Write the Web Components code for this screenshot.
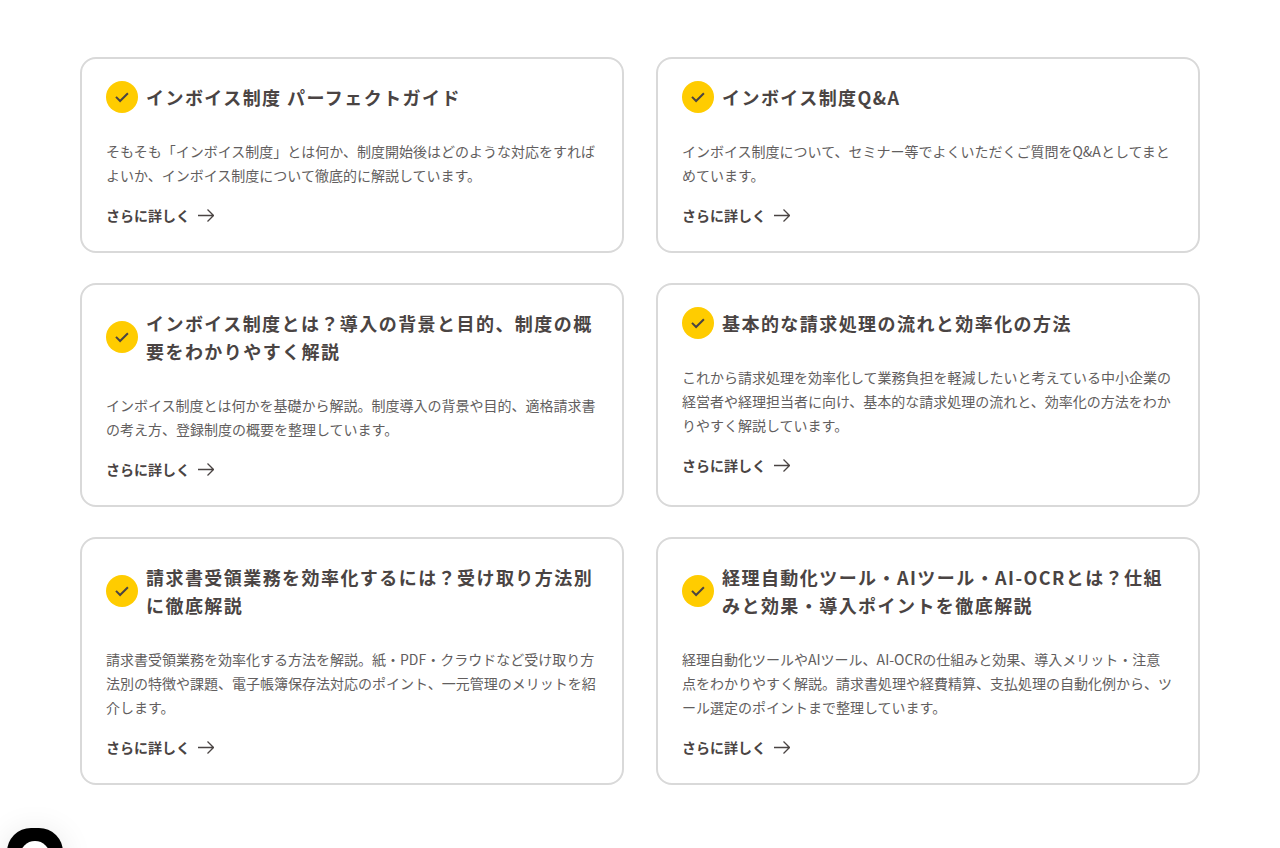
<!DOCTYPE html>
<html lang="ja">
<head>
<meta charset="utf-8">
<meta name="viewport" content="width=device-width, initial-scale=1">
<title>インボイス制度</title>
<style>
  body {
    margin: 0;
    background: #fff;
    color: #4a4443;
    font-family: "Noto Sans CJK JP", sans-serif;
  }
</style>
</head>
<body>
<article-grid>
  <article-card href="#guide">
    <span slot="title">インボイス制度 パーフェクトガイド</span>
    そもそも「インボイス制度」とは何か、制度開始後はどのような対応をすればよいか、インボイス制度について徹底的に解説しています。
  </article-card>
  <article-card href="#qa">
    <span slot="title">インボイス制度Q&amp;A</span>
    インボイス制度について、セミナー等でよくいただくご質問をQ&amp;Aとしてまとめています。
  </article-card>
  <article-card href="#background">
    <span slot="title">インボイス制度とは？導入の背景と目的、制度の概要をわかりやすく解説</span>
    インボイス制度とは何かを基礎から解説。制度導入の背景や目的、適格請求書の考え方、登録制度の概要を整理しています。
  </article-card>
  <article-card href="#billing">
    <span slot="title">基本的な請求処理の流れと効率化の方法</span>
    これから請求処理を効率化して業務負担を軽減したいと考えている中小企業の経営者や経理担当者に向け、基本的な請求処理の流れと、効率化の方法をわかりやすく解説しています。
  </article-card>
  <article-card href="#receiving">
    <span slot="title">請求書受領業務を効率化するには？受け取り方法別に徹底解説</span>
    請求書受領業務を効率化する方法を解説。紙・PDF・クラウドなど受け取り方法別の特徴や課題、電子帳簿保存法対応のポイント、一元管理のメリットを紹介します。
  </article-card>
  <article-card href="#automation">
    <span slot="title">経理自動化ツール・AIツール・AI-OCRとは？仕組みと効果・導入ポイントを徹底解説</span>
    経理自動化ツールやAIツール、AI-OCRの仕組みと効果、導入メリット・注意点をわかりやすく解説。請求書処理や経費精算、支払処理の自動化例から、ツール選定のポイントまで整理しています。
  </article-card>
</article-grid>
<chat-launcher></chat-launcher>

<script>
class ArticleGrid extends HTMLElement {
  constructor() {
    super();
    this.attachShadow({ mode: "open" }).innerHTML = `
      <style>
        :host { display: block; padding: 57px 80px 63px; }
        main {
          display: grid;
          grid-template-columns: repeat(2, minmax(0, 1fr));
          gap: 30px 32px;
          max-width: 1120px;
          margin: 0 auto;
        }
        @media (max-width: 800px) {
          :host { padding: 32px 16px; }
          main { grid-template-columns: minmax(0, 1fr); }
        }
      </style>
      <main><slot></slot></main>`;
  }
}

class CheckBadge extends HTMLElement {
  constructor() {
    super();
    this.attachShadow({ mode: "open" }).innerHTML = `
      <style>
        :host { display: block; width: 32px; height: 32px; }
        svg { display: block; }
      </style>
      <svg width="32" height="32" viewBox="0 0 32 32" fill="none" aria-hidden="true">
        <circle cx="16" cy="16" r="16" fill="#fc0"/>
        <path d="M10 15.9 14.1 20 21.9 12.3" stroke="#4a4443" stroke-width="2"/>
      </svg>`;
  }
}

class ArticleCard extends HTMLElement {
  constructor() {
    super();
    this.attachShadow({ mode: "open" }).innerHTML = `
      <style>
        :host {
          display: block;
          box-sizing: border-box;
          padding: 24px;
          border: 2px solid #d9d9d9;
          border-radius: 16px;
          background: #fff;
        }
        header { display: flex; align-items: center; gap: 8px; }
        check-badge { flex: none; margin: -2px 0; }
        h2 {
          flex: 1;
          min-width: 0;
          margin: 0;
          font-size: 18px;
          line-height: 28px;
          font-weight: 700;
          letter-spacing: 0.08em;
        }
        p {
          margin: 28px 0 16px;
          color: #625e5e;
          font-size: 14px;
          line-height: 24px;
        }
        a {
          display: flex;
          align-items: center;
          gap: 8px;
          width: fit-content;
          color: inherit;
          font-size: 14px;
          line-height: 24px;
          font-weight: 700;
          text-decoration: none;
        }
      </style>
      <article>
        <header><check-badge></check-badge><h2><slot name="title"></slot></h2></header>
        <p><slot></slot></p>
        <a><span>さらに詳しく</span><svg width="16" height="16" viewBox="0 0 16 16" fill="none" stroke="currentColor" stroke-width="1.3" aria-hidden="true"><path d="M0 8.5H15.5M9.5 2.5 15.5 8.5 9.5 14.5"/></svg></a>
      </article>`;
    this.shadowRoot.querySelector("a").href = this.getAttribute("href") || "#";
  }
}

class ChatLauncher extends HTMLElement {
  constructor() {
    super();
    this.attachShadow({ mode: "open" }).innerHTML = `
      <style>
        :host { position: fixed; left: 7px; bottom: -36px; }
        button {
          display: grid;
          place-items: center;
          width: 56px;
          height: 56px;
          padding: 0;
          border: 0;
          border-radius: 24px;
          background: #000;
          box-shadow: 0 4px 32px rgba(0, 0, 0, 0.1);
        }
      </style>
      <button type="button" aria-label="チャットを開く">
        <svg width="30" height="30" viewBox="0 0 30 30" aria-hidden="true"><circle cx="15" cy="15" r="15" fill="#fff"/></svg>
      </button>`;
  }
}

customElements.define("check-badge", CheckBadge);
customElements.define("article-card", ArticleCard);
customElements.define("article-grid", ArticleGrid);
customElements.define("chat-launcher", ChatLauncher);
</script>
</body>
</html>
